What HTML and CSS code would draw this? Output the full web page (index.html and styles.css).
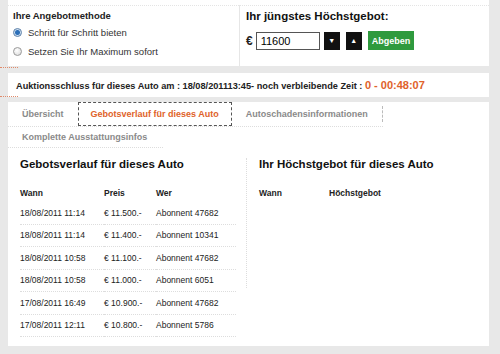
FILE: index.html
```html
<!DOCTYPE html>
<html lang="de">
  <head>
    <meta charset="UTF-8" />
    <title>Gebotsverlauf</title>
    <link rel="stylesheet" href="styles.css">
  </head>
  <body>
    <section class="panel bid-panel">
      <div class="method">
        <h3>Ihre Angebotmethode</h3>
        <label class="radio-row"><span class="radio checked"></span>Schritt für Schritt bieten</label>
        <label class="radio-row"><span class="radio"></span>Setzen Sie Ihr Maximum sofort</label>
      </div>
      <div class="latest">
        <h2>Ihr jüngstes Höchstgebot:</h2>
        <div class="bid-form">
          <span class="euro">€</span>
          <input type="text" class="amount" value="11600" />
          <button class="step-btn">&#9660;</button>
          <button class="step-btn">&#9650;</button>
          <button class="submit-btn">Abgeben</button>
        </div>
      </div>
    </section>

    <section class="panel closing-panel">
      Auktionsschluss für dieses Auto am : 18/08/201113:45- noch verbleibende Zeit :
      <span class="countdown">0 - 00:48:07</span>
    </section>

    <section class="panel tabs-panel">
      <div class="tab-row">
        <span class="tab">Übersicht</span>
        <span class="tab active">Gebotsverlauf für dieses Auto</span>
        <span class="tab last">Autoschadensinformationen</span>
      </div>
      <div class="tab-row second">
        <span class="tab">Komplette Ausstattungsinfos</span>
      </div>

      <div class="columns">
        <div class="col history">
          <h2>Gebotsverlauf für dieses Auto</h2>
          <table class="bids">
            <thead>
              <tr><th class="c-when">Wann</th><th class="c-price">Preis</th><th>Wer</th></tr>
            </thead>
            <tbody>
              <tr><td>18/08/2011 11:14</td><td>€ 11.500.-</td><td>Abonnent 47682</td></tr>
              <tr><td>18/08/2011 11:14</td><td>€ 11.400.-</td><td>Abonnent 10341</td></tr>
              <tr><td>18/08/2011 10:58</td><td>€ 11.100.-</td><td>Abonnent 47682</td></tr>
              <tr><td>18/08/2011 10:58</td><td>€ 11.000.-</td><td>Abonnent 6051</td></tr>
              <tr><td>17/08/2011 16:49</td><td>€ 10.900.-</td><td>Abonnent 47682</td></tr>
              <tr><td>17/08/2011 12:11</td><td>€ 10.800.-</td><td>Abonnent 5786</td></tr>
            </tbody>
          </table>
        </div>
        <div class="col mine">
          <h2>Ihr Höchstgebot für dieses Auto</h2>
          <table class="bids">
            <thead>
              <tr><th class="c-mine-when">Wann</th><th>Höchstgebot</th></tr>
            </thead>
          </table>
        </div>
      </div>
    </section>
  </body>
</html>
```

FILE: styles.css
```css
body {
  margin: 0;
  padding: 0 11px 0 8px;
  background-color: #e8e8e8;
  font-family: "Liberation Sans", Arial, sans-serif;
  font-size: 9px;
  color: #222;
}
.panel {
  background-color: #fff;
  position: relative;
}
.panel::before {
  content: "";
  position: absolute;
  left: -8px;
  top: -6px;
  width: 18px;
  border-top: 1px dotted #e08a6a;
}
.bid-panel::before {
  display: none;
}
.bid-panel {
  display: flex;
  height: 66px;
  box-sizing: border-box;
  padding-top: 5px;
}
.bid-panel::after {
  content: "";
  position: absolute;
  left: 0;
  right: 0;
  top: 5px;
  border-top: 1px dotted #e4e4e4;
}
.method {
  width: 232px;
  border-right: 1px solid #e6e6e6;
  padding: 5px 0 0 5px;
  box-sizing: border-box;
}
.method h3 {
  margin: 0 0 2px;
  font-size: 9.5px;
  font-weight: bold;
}
.radio-row {
  display: flex;
  align-items: center;
  height: 19px;
  font-size: 9.5px;
  color: #333;
}
.radio {
  width: 9px;
  height: 9px;
  border-radius: 50%;
  border: 1px solid #9a9a9a;
  background: radial-gradient(circle at 40% 35%, #fff, #d8d8d8);
  margin-right: 6px;
  box-sizing: border-box;
}
.radio.checked {
  border-color: #5a7fa8;
  background: radial-gradient(circle, #2c6fb8 0, #2c6fb8 2px, #c9dcef 3px, #e9f1f9 5px);
}
.latest {
  flex: 1;
  padding: 5px 0 0 6px;
}
.latest h2 {
  margin: 0 0 9px;
  font-size: 11.5px;
  font-weight: bold;
  color: #111;
}
.bid-form {
  display: flex;
  align-items: center;
}
.euro {
  font-size: 12px;
  font-weight: bold;
  margin-right: 3px;
}
.amount {
  width: 64px;
  height: 18px;
  box-sizing: border-box;
  border: 1px solid #555;
  padding: 0 4px;
  font-family: inherit;
  font-size: 11px;
  margin-right: 4px;
}
.step-btn {
  width: 16px;
  height: 18px;
  padding: 0;
  border: none;
  background-color: #111;
  color: #fff;
  font-size: 7px;
  margin-right: 6px;
}
.submit-btn {
  height: 19px;
  padding: 0 4px;
  border: none;
  background-color: #2f9a3e;
  color: #fff;
  font-family: inherit;
  font-weight: bold;
  font-size: 9px;
}
.closing-panel {
  margin-top: 7px;
  height: 24px;
  line-height: 24px;
  padding-left: 8px;
  font-size: 9.2px;
  font-weight: bold;
  color: #222;
}
.countdown {
  color: #e0622a;
  font-size: 11px;
}
.tabs-panel {
  margin-top: 5px;
  height: 244px;
}
.tab-row {
  display: flex;
  height: 24px;
  align-items: stretch;
  border-bottom: 1px dotted #ddd;
  width: 375px;
}
.tab-row.second {
  width: 155px;
  height: 20px;
}
.tab {
  display: flex;
  align-items: center;
  padding: 0 14px;
  font-weight: bold;
  font-size: 9px;
  color: #8a8a8a;
}
.tab.active {
  color: #e0622a;
  border: 1px dashed #555;
  padding: 0 12px;
}
.tab.last {
  padding-right: 14px;
  border-right: 1px dashed #bbb;
  margin: 4px 0;
}
.columns {
  display: flex;
  padding: 10px 0 0 12px;
}
.col h2 {
  margin: 0 0 13px;
  font-size: 11.5px;
  font-weight: bold;
  color: #111;
}
.history {
  width: 216px;
  padding-right: 10px;
  border-right: 1px dotted #ddd;
  height: 130px;
}
.mine {
  padding-left: 12px;
}
.bids {
  border-collapse: collapse;
  width: 216px;
  font-size: 8.5px;
}
.bids th {
  text-align: left;
  font-weight: bold;
  height: 19px;
  padding: 0;
}
.bids td {
  height: 21.5px;
  padding: 0;
  border-bottom: 1px dotted #ddd;
  color: #222;
}
.c-when {
  width: 84px;
}
.c-price {
  width: 52px;
}
.c-mine-when {
  width: 70px;
}
```
